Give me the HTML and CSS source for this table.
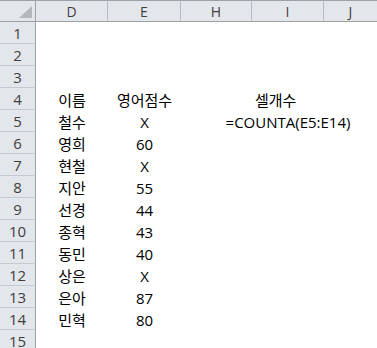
FILE: index.html
```html
<!DOCTYPE html>
<html lang="ko">
<head>
<meta charset="utf-8">
<link rel="stylesheet" href="styles.css">
</head>
<body>
<div class="sheet">
  <div class="hd corner"><span class="tri"></span></div>
  <div class="hd col">D</div>
  <div class="hd col">E</div>
  <div class="hd col">H</div>
  <div class="hd col">I</div>
  <div class="hd col last">J</div>

  <div class="rh">1</div><div class="c"></div><div class="c"></div><div class="c"></div><div class="c"></div><div class="c"></div>
  <div class="rh">2</div><div class="c"></div><div class="c"></div><div class="c"></div><div class="c"></div><div class="c"></div>
  <div class="rh">3</div><div class="c"></div><div class="c"></div><div class="c"></div><div class="c"></div><div class="c"></div>
  <div class="rh">4</div><div class="c ctr">이름</div><div class="c ctr">영어점수</div><div class="c"></div><div class="c title">셀개수</div><div class="c"></div>
  <div class="rh">5</div><div class="c ctr">철수</div><div class="c ctr">X</div><div class="c"></div><div class="c ctr over">=COUNTA(E5:E14)</div><div class="c"></div>
  <div class="rh">6</div><div class="c ctr">영희</div><div class="c ctr">60</div><div class="c"></div><div class="c"></div><div class="c"></div>
  <div class="rh">7</div><div class="c ctr">현철</div><div class="c ctr">X</div><div class="c"></div><div class="c"></div><div class="c"></div>
  <div class="rh">8</div><div class="c ctr">지안</div><div class="c ctr">55</div><div class="c"></div><div class="c"></div><div class="c"></div>
  <div class="rh">9</div><div class="c ctr">선경</div><div class="c ctr">44</div><div class="c"></div><div class="c"></div><div class="c"></div>
  <div class="rh">10</div><div class="c ctr">종혁</div><div class="c ctr">43</div><div class="c"></div><div class="c"></div><div class="c"></div>
  <div class="rh">11</div><div class="c ctr">동민</div><div class="c ctr">40</div><div class="c"></div><div class="c"></div><div class="c"></div>
  <div class="rh">12</div><div class="c ctr">상은</div><div class="c ctr">X</div><div class="c"></div><div class="c"></div><div class="c"></div>
  <div class="rh">13</div><div class="c ctr">은아</div><div class="c ctr">87</div><div class="c"></div><div class="c"></div><div class="c"></div>
  <div class="rh">14</div><div class="c ctr">민혁</div><div class="c ctr">80</div><div class="c"></div><div class="c"></div><div class="c"></div>
  <div class="rh">15</div><div class="c"></div><div class="c"></div><div class="c"></div><div class="c"></div><div class="c"></div>
</div>
</body>
</html>
```

FILE: styles.css
```css
html, body {
  margin: 0;
  padding: 0;
  background: #ffffff;
}
body {
  font-family: "Open Sans", "Noto Sans CJK KR", sans-serif;
  color: #000;
  overflow: hidden;
}
.sheet {
  display: grid;
  grid-template-columns: 36px 72px 73px 71px 72px 1fr;
  grid-template-rows: 22px;
  grid-auto-rows: 22px;
  width: 377px;
}
.hd {
  background: #e3e6ea;
  border-top: 1px solid #9da1a6;
  border-right: 1px solid #b8bcc2;
  border-bottom: 1px solid #9da1a6;
  box-sizing: border-box;
  display: flex;
  align-items: center;
  justify-content: center;
  font-size: 14px;
  color: #3f3f3f;
  padding-top: 1px;
}
.hd.last { border-right: none; }
.corner {
  position: relative;
  border-right: 1px solid #9da1a6;
}
.tri {
  position: absolute;
  right: 3px;
  bottom: 3px;
  width: 0;
  height: 0;
  border-left: 13px solid transparent;
  border-bottom: 12px solid #b4b8bd;
}
.rh {
  background: #e3e6ea;
  border-right: 1px solid #9da1a6;
  border-bottom: 1px solid #c6cad0;
  box-sizing: border-box;
  display: flex;
  align-items: flex-end;
  justify-content: center;
  font-size: 15px;
  line-height: 18px;
  color: #3f3f3f;
  padding-bottom: 1px;
}
.c {
  display: flex;
  align-items: flex-end;
  font-size: 15px;
  line-height: 18px;
  padding-bottom: 1px;
  white-space: nowrap;
  min-width: 0;
}
.ctr { justify-content: center; }
.over {
  overflow: visible;
}
.title {
  padding-left: 3px;
}
```
